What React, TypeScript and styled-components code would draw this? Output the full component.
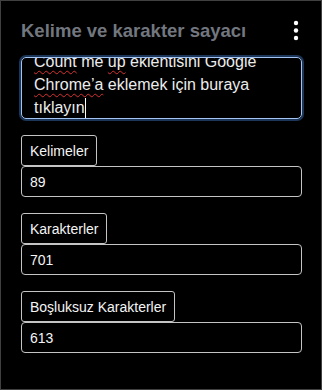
import React, { FC, useEffect, useRef } from 'react';
import styled, { createGlobalStyle } from 'styled-components';

const GlobalStyle = createGlobalStyle`
  html, body {
    margin: 0;
    padding: 0;
    background: #000;
  }
  * {
    box-sizing: border-box;
  }
`;

const Window = styled.div`
  width: 322px;
  height: 390px;
  background: #000;
  border: 1px solid #404040;
  padding: 12px 19px 0 20px;
  font-family: 'Liberation Sans', Arial, sans-serif;
  color: #f2f2f2;
  display: flex;
  flex-direction: column;
`;

const Header = styled.div`
  display: flex;
  align-items: center;
  justify-content: space-between;
  height: 36px;
  margin-bottom: 8px;
`;

const Title = styled.h1`
  margin: 0;
  font-size: 18.5px;
  font-weight: 700;
  color: #72777f;
  white-space: nowrap;
`;

const MenuButton = styled.button`
  background: none;
  border: none;
  padding: 0;
  width: 12px;
  height: 24px;
  display: flex;
  align-items: center;
  justify-content: center;
  cursor: pointer;
`;

const TextBox = styled.div`
  height: 62px;
  border: 1px solid #a3c4f3;
  border-radius: 5px;
  box-shadow: 0 0 0 2px #1b3658;
  padding: 8px 12px;
  font-size: 16px;
  line-height: 23px;
  color: #ececec;
  overflow: hidden;
  margin-bottom: 16px;
`;

const Misspelled = styled.span`
  text-decoration: underline wavy #d83030;
  text-decoration-thickness: 1px;
  text-underline-offset: 3px;
  text-decoration-skip-ink: none;
`;

const Caret = styled.span`
  display: inline-block;
  width: 1px;
  height: 20px;
  background: #fff;
  vertical-align: -5px;
`;

const Section = styled.div`
  display: flex;
  flex-direction: column;
  align-items: flex-start;
  margin-bottom: 16px;
`;

const Label = styled.div`
  height: 31px;
  display: flex;
  align-items: center;
  padding: 0 8px;
  border: 1px solid #c4c4c4;
  border-radius: 3px;
  font-size: 14px;
  color: #f4f4f4;
  white-space: nowrap;
`;

const Value = styled.div`
  align-self: stretch;
  height: 31px;
  display: flex;
  align-items: center;
  padding: 0 8px;
  border: 1px solid #c4c4c4;
  border-radius: 4px;
  font-size: 14px;
  color: #f4f4f4;
`;

const KebabIcon: FC = () => (
  <svg width="6" height="22" viewBox="0 0 6 22" fill="#fff">
    <circle cx="3" cy="3" r="2.2" />
    <circle cx="3" cy="10.5" r="2.2" />
    <circle cx="3" cy="18" r="2.2" />
  </svg>
);

interface Stat {
  label: string;
  value: number;
}

const stats: Stat[] = [
  { label: 'Kelimeler', value: 89 },
  { label: 'Karakterler', value: 701 },
  { label: 'Boşluksuz Karakterler', value: 613 },
];

const App: FC = () => {
  const boxRef = useRef<HTMLDivElement>(null);

  useEffect(() => {
    if (boxRef.current) boxRef.current.scrollTop = 16;
  }, []);

  return (
    <>
      <GlobalStyle />
      <Window>
        <Header>
          <Title>Kelime ve karakter sayacı</Title>
          <MenuButton aria-label="Menü">
            <KebabIcon />
          </MenuButton>
        </Header>
        <TextBox ref={boxRef}>
          <Misspelled>Count</Misspelled> me <Misspelled>up</Misspelled> eklentisini Google{' '}
          <Misspelled>Chrome’a</Misspelled> eklemek için buraya tıklayın
          <Caret />
        </TextBox>
        {stats.map(({ label, value }) => (
          <Section key={label}>
            <Label>{label}</Label>
            <Value>{value}</Value>
          </Section>
        ))}
      </Window>
    </>
  );
};

export default App;
